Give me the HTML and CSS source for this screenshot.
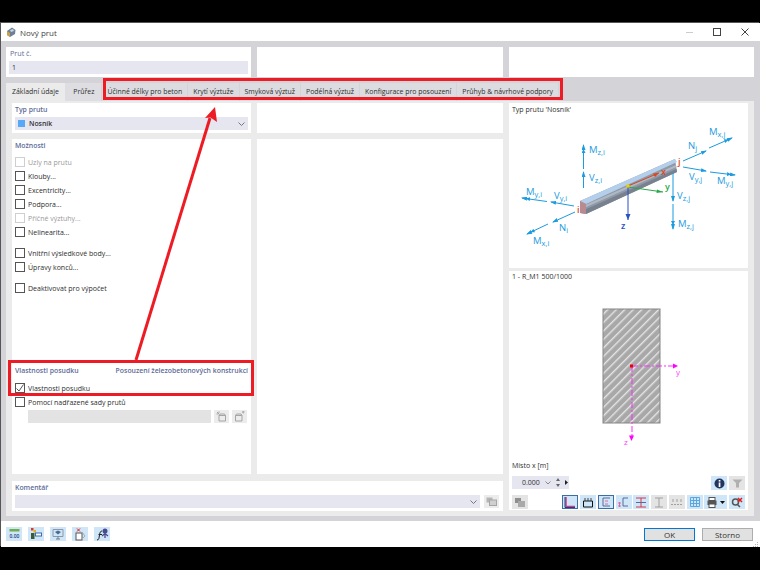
FILE: index.html
```html
<!DOCTYPE html>
<html lang="cs">
<head>
    <meta charset="UTF-8">
    <title>Nový prut</title>
    <link rel="stylesheet" href="styles.css">
</head>
<body>
<svg width="0" height="0" class="defs">
    <defs>
        <pattern id="hatch" patternUnits="userSpaceOnUse" width="6" height="6" patternTransform="rotate(45)">
            <rect width="6" height="6" fill="#a8a8a8"/>
            <rect width="1.4" height="6" fill="#e4e4e4"/>
        </pattern>
        <marker id="head" markerWidth="6" markerHeight="4" refX="5" refY="2" orient="auto" markerUnits="userSpaceOnUse">
            <path d="M0 0L6 2L0 4Z" fill="#1b9be0"/>
        </marker>
        <marker id="head2" markerWidth="9" markerHeight="4" refX="8" refY="2" orient="auto" markerUnits="userSpaceOnUse">
            <path d="M0 0L4 2L0 4ZM3 0L9 2L3 4Z" fill="#1b9be0"/>
        </marker>
    </defs>
</svg>

<div class="window">
    <div class="titlebar">
        <svg class="app-icon" width="10" height="11" viewBox="0 0 10 11">
            <path d="M1 4L6 0.5L9.5 3L9 7L4 10L1 8Z" fill="#6d7f99"/>
            <path d="M1 8L4 10V6L1 4Z" fill="#c9a24a"/>
            <path d="M4 3L7 2L8 4L5 5Z" fill="#c6d4e6"/>
        </svg>
        <span class="title">Nový prut</span>
        <div class="win-controls">
            <span class="win-min"></span>
            <span class="win-max"></span>
            <svg width="8" height="8" viewBox="0 0 8 8"><path d="M0.5 0.5L7.5 7.5M7.5 0.5L0.5 7.5" stroke="#444" fill="none"/></svg>
        </div>
    </div>

    <div class="top-row">
        <div class="panel top-panel">
            <div class="heading">Prut č.</div>
            <div class="field">1</div>
        </div>
        <div class="panel top-panel mid"></div>
        <div class="panel top-panel"></div>
    </div>

    <div class="tabs">
        <div class="tab active">Základní údaje</div>
        <div class="tab plain">Průřez</div>
        <div class="tab">Účinné délky pro beton</div>
        <div class="tab">Krytí výztuže</div>
        <div class="tab">Smyková výztuž</div>
        <div class="tab">Podélná výztuž</div>
        <div class="tab">Konfigurace pro posouzení</div>
        <div class="tab">Průhyb &amp; návrhové podpory</div>
    </div>

    <div class="content">
        <div class="left-side">
            <div class="columns">
                <div class="col-a">
                    <div class="panel type-panel">
                        <div class="heading">Typ prutu</div>
                        <div class="field select">
                            <span class="swatch"></span>
                            <span class="strong">Nosník</span>
                            <svg class="chevron" width="7" height="4" viewBox="0 0 7 4"><path d="M0.5 0.5L3.5 3.5L6.5 0.5" fill="none" stroke="#777"/></svg>
                        </div>
                    </div>
                    <div class="panel options">
                        <div class="heading">Možnosti</div>
                        <div class="checks">
                            <div class="check off"><span class="box"></span>Uzly na prutu</div>
                            <div class="check"><span class="box"></span>Klouby...</div>
                            <div class="check"><span class="box"></span>Excentricity...</div>
                            <div class="check"><span class="box"></span>Podpora...</div>
                            <div class="check off"><span class="box"></span>Příčné výztuhy...</div>
                            <div class="check"><span class="box"></span>Nelinearita...</div>
                        </div>
                        <div class="checks">
                            <div class="check"><span class="box"></span>Vnitřní výsledkové body...</div>
                            <div class="check"><span class="box"></span>Úpravy konců...</div>
                        </div>
                        <div class="checks">
                            <div class="check"><span class="box"></span>Deaktivovat pro výpočet</div>
                        </div>
                        <div class="design">
                            <div class="design-head">
                                <span class="heading">Vlastnosti posudku</span>
                                <span class="heading">Posouzení železobetonových konstrukcí</span>
                            </div>
                            <div class="check">
                                <span class="box">
                                    <svg width="8" height="8" viewBox="0 0 8 8"><path d="M0.5 4.5L3 7L7.5 0.5" fill="none" stroke="#555"/></svg>
                                </span>Vlastnosti posudku
                            </div>
                            <div class="check"><span class="box"></span>Pomocí nadřazené sady prutů</div>
                            <div class="set-row">
                                <div class="set-field"></div>
                                <div class="set-btn">
                                    <svg width="11" height="11" viewBox="0 0 11 11"><path d="M3 4.5H9.5V10H3ZM3 4.5L4 3H8.5L9.5 4.5M1 1L3 3M0.5 3H2.5M3 0.5V2" fill="none" stroke="#a5a5a5"/></svg>
                                </div>
                                <div class="set-btn">
                                    <svg width="11" height="11" viewBox="0 0 11 11"><path d="M1.5 4.5H8V10H1.5ZM1.5 4.5L2.5 3H7L8 4.5M8 1H10.5M9.2 0V2.5" fill="none" stroke="#a5a5a5"/></svg>
                                </div>
                            </div>
                        </div>
                    </div>
                </div>
                <div class="col-b">
                    <div class="panel type-panel"></div>
                    <div class="panel options"></div>
                </div>
            </div>
            <div class="panel comment">
                <div class="heading">Komentář</div>
                <div class="comment-row">
                    <div class="field select comment-field">
                        <svg class="chevron" width="7" height="4" viewBox="0 0 7 4"><path d="M0.5 0.5L3.5 3.5L6.5 0.5" fill="none" stroke="#777"/></svg>
                    </div>
                    <div class="comment-btn">
                        <svg width="11" height="9" viewBox="0 0 11 9"><rect x="0.5" y="0.5" width="6" height="5" fill="#b5b5b5"/><rect x="3.5" y="3" width="7" height="5.5" fill="#cfcfcf" stroke="#a5a5a5"/></svg>
                    </div>
                </div>
            </div>
        </div>

        <div class="right-side">
            <div class="panel graphic">
                <div class="graphic-label">Typ prutu 'Nosník'</div>
                <svg class="beam" width="239" height="165" viewBox="509 103 239 165">
                    <!-- beam -->
                    <path d="M580 201L675 159L677 172L586 214L580 213Z" fill="#8f99a8"/>
                    <path d="M580 201L675 159L677 162L586 204Z" fill="#b4cfeb"/>
                    <path d="M583 206L676 165L676.500 167L584 208Z" fill="#b0b8c4"/>
                    <path d="M584 210L676.500 169L677 172L586 214Z" fill="#78828f"/>
                    <path d="M580 201L586 204V214L580 213Z" fill="#b98a90"/>
                    <!-- local axes -->
                    <path d="M628 186L659 173" stroke="#d8471c" fill="none"/>
                    <path d="M659 173L653 173.500L655 177Z" fill="#d8471c"/>
                    <path d="M628 187L663 192" stroke="#2aa84a" fill="none"/>
                    <path d="M663 192L657 189.500L656.500 193Z" fill="#2aa84a"/>
                    <path d="M628 187V220" stroke="#2a50c8" fill="none"/>
                    <path d="M628 220L625.500 214H630.500Z" fill="#2a50c8"/>
                    <circle cx="628" cy="186" r="1.800" fill="#f0d000"/>
                    <!-- forces -->
                    <g stroke="#1b9be0" fill="none">
                        <path d="M583.500 188V172" marker-end="url(#head)"/>
                        <path d="M583.500 169V145" marker-end="url(#head2)"/>
                        <path d="M574 206L551 202" marker-end="url(#head)"/>
                        <path d="M547 201.500L522 198" marker-end="url(#head2)"/>
                        <path d="M575 212L553 222" marker-end="url(#head)"/>
                        <path d="M548 224L527 234" marker-end="url(#head2)"/>
                        <path d="M683 161L706 151" marker-end="url(#head)"/>
                        <path d="M709 148L732 138" marker-end="url(#head2)"/>
                        <path d="M683 167L706 171" marker-end="url(#head)"/>
                        <path d="M710 172L735 175" marker-end="url(#head2)"/>
                        <path d="M673 173V201" marker-end="url(#head)"/>
                        <path d="M673 204V229" marker-end="url(#head2)"/>
                    </g>
                    <g class="force-label">
                        <text x="589" y="153">M<tspan class="sub" dy="2">z,i</tspan></text>
                        <text x="589" y="181">V<tspan class="sub" dy="2">z,i</tspan></text>
                        <text x="526" y="195">M<tspan class="sub" dy="2">y,i</tspan></text>
                        <text x="554" y="199">V<tspan class="sub" dy="2">y,i</tspan></text>
                        <text x="559" y="231">N<tspan class="sub" dy="2">i</tspan></text>
                        <text x="533" y="244">M<tspan class="sub" dy="2">x,i</tspan></text>
                        <text x="688" y="149">N<tspan class="sub" dy="2">j</tspan></text>
                        <text x="709" y="135">M<tspan class="sub" dy="2">x,j</tspan></text>
                        <text x="689" y="180">V<tspan class="sub" dy="2">y,j</tspan></text>
                        <text x="717" y="184">M<tspan class="sub" dy="2">y,j</tspan></text>
                        <text x="677" y="199">V<tspan class="sub" dy="2">z,j</tspan></text>
                        <text x="678" y="227">M<tspan class="sub" dy="2">z,j</tspan></text>
                    </g>
                    <text class="axis-label" x="577" y="213" fill="#d8471c">i</text>
                    <text class="axis-label" x="678" y="165" fill="#d8471c">j</text>
                    <text class="axis-label" x="661" y="175" fill="#d8471c">x</text>
                    <text class="axis-label" x="665" y="190" fill="#2aa84a">y</text>
                    <text class="axis-label" x="621" y="229" fill="#2a50c8">z</text>
                </svg>
            </div>
            <div class="panel section">
                <div class="section-label">1 - R_M1 500/1000</div>
                <svg class="section-view" width="239" height="177" viewBox="509 283 239 177">
                    <rect x="603" y="309" width="57" height="114" fill="url(#hatch)" stroke="#858585"/>
                    <path d="M632 366H675M632 366V436" stroke="#ff2cff" stroke-dasharray="6 2 2 2" fill="none"/>
                    <path d="M678 366L673 363.500V368.500Z" fill="#ff00ff"/>
                    <path d="M631.500 441L629 435.500H634Z" fill="#ff00ff"/>
                    <rect x="630" y="364.500" width="3" height="3" fill="#f00000"/>
                    <text class="section-axis" x="676" y="375">y</text>
                    <text class="section-axis" x="624" y="445">z</text>
                </svg>
                <div class="section-label">Místo x [m]</div>
                <div class="spin-row">
                    <div class="spinner">
                        <span class="spin-value">0.000</span>
                        <svg width="6" height="4" viewBox="0 0 6 4"><path d="M0.500 0.500L3 3L5.500 0.500" fill="none" stroke="#888"/></svg>
                        <svg width="4" height="9" viewBox="0 0 4 9"><path d="M2 0L4 3H0ZM2 9L0 6H4Z" fill="#666"/></svg>
                        <svg width="3" height="5" viewBox="0 0 3 5"><path d="M0 0L3 2.500L0 5Z" fill="#222"/></svg>
                    </div>
                    <div class="spin-tools">
                        <div class="tool on">
                            <svg width="11" height="11" viewBox="0 0 11 11"><circle cx="5.500" cy="5.500" r="5" fill="#23345e"/><rect x="4.700" y="4.500" width="1.700" height="4.500" fill="#fff"/><rect x="4.700" y="2" width="1.700" height="1.600" fill="#fff"/></svg>
                        </div>
                        <div class="tool gray">
                            <svg width="11" height="9" viewBox="0 0 11 9"><path d="M0.500 0.500H10.500L7 4V8.500H4V4Z" fill="#b0b0b0"/></svg>
                        </div>
                    </div>
                </div>
                <div class="toolbar">
                    <div class="tool gray">
                        <svg width="12" height="11" viewBox="0 0 12 11"><rect x="1" y="1" width="6" height="5" fill="#8e8e8e"/><rect x="4" y="4" width="7" height="6" fill="#a9a9a9"/></svg>
                    </div>
                    <div class="tool-group">
                        <div class="tool on framed"><svg width="12" height="12" viewBox="0 0 12 12"><path d="M2 1V10.500H11" fill="none" stroke="#d8388c" stroke-width="1.500"/><path d="M1 1V11.500H11" fill="none" stroke="#1e3f7a"/></svg></div>
                        <div class="tool on"><svg width="12" height="11" viewBox="0 0 12 11"><path d="M1.500 4H10.500V10H1.500Z" fill="none" stroke="#111"/><path d="M3 1V4M6 1V4M9 1V4" stroke="#444"/></svg></div>
                        <div class="tool on framed"><svg width="12" height="12" viewBox="0 0 12 12"><path d="M3 2H10M3 2V10H10" fill="none" stroke="#5a6a95"/><path d="M5 5H8M5 8H8" stroke="#d86aa8"/></svg></div>
                        <div class="tool on"><svg width="13" height="12" viewBox="0 0 13 12"><path d="M6 2H11M6 2V10H11" fill="none" stroke="#5a6a95"/><path d="M1 7H4M1 10H4M2.500 6V11" stroke="#d86aa8"/></svg></div>
                        <div class="tool on"><svg width="12" height="11" viewBox="0 0 12 11"><path d="M1 1H11M1 10H11M6 1V10" stroke="#d8384c" fill="none"/><path d="M1 5.500H11" stroke="#5a6a95"/></svg></div>
                        <div class="tool gray"><svg width="12" height="11" viewBox="0 0 12 11"><path d="M2 1H10M2 10H10M6 1V10" stroke="#a0a0a0" fill="none"/></svg></div>
                        <div class="tool gray"><svg width="12" height="7" viewBox="0 0 12 7"><path d="M0 5.500H12" stroke="#a0a0a0" stroke-dasharray="2 1"/><path d="M2 0V3M6 0V3M10 0V3" stroke="#a0a0a0"/></svg></div>
                        <div class="tool on"><svg width="10" height="10" viewBox="0 0 10 10"><path d="M0.500 0.500H9.500V9.500H0.500ZM0.500 3.500H9.500M0.500 6.500H9.500M3.500 0.500V9.500M6.500 0.500V9.500" fill="none" stroke="#5aa7e0"/></svg></div>
                        <div class="tool on wide">
                            <svg width="10" height="11" viewBox="0 0 10 11"><rect x="2" y="0.500" width="6" height="3" fill="#fff" stroke="#555"/><rect x="0.500" y="3.500" width="9" height="4.500" fill="#555"/><rect x="2" y="7" width="6" height="3.500" fill="#fff" stroke="#555"/></svg>
                            <svg width="5" height="3" viewBox="0 0 5 3"><path d="M0 0H5L2.500 3Z" fill="#111"/></svg>
                        </div>
                        <div class="tool on"><svg width="12" height="11" viewBox="0 0 12 11"><circle cx="4.500" cy="5" r="3" fill="none" stroke="#555" stroke-width="1.500"/><path d="M6.500 7.500L9 10" stroke="#555" stroke-width="1.500"/><path d="M7 1L11 5M11 1L7 5" stroke="#e02020" stroke-width="1.500"/></svg></div>
                    </div>
                </div>
            </div>
        </div>
    </div>

    <div class="footer">
        <div class="foot-tools">
            <div class="tool on"><svg width="11" height="10" viewBox="0 0 11 10"><rect x="0.500" y="0" width="10" height="2.500" fill="#6fae4e"/><text class="icon-text" x="0.500" y="9">0.00</text></svg></div>
            <div class="tool on"><svg width="12" height="12" viewBox="0 0 12 12"><rect x="1" y="0" width="2.500" height="2.500" fill="#d8382c"/><rect x="3.500" y="2" width="2.500" height="2.500" fill="#e0b020"/><rect x="1" y="5" width="3.500" height="6" fill="#3a5a3a"/><rect x="5.500" y="5" width="6" height="3" fill="#fff" stroke="#3a6ab0"/></svg></div>
            <div class="tool on"><svg width="12" height="12" viewBox="0 0 12 12"><path d="M1 1.500H11V8.500H1Z" fill="none" stroke="#8a98a8"/><path d="M3 4L6 2.500L9 4L6 6.500Z" fill="#4a6a90"/><path d="M6 8.500V11M4 11H8" stroke="#6a7a8a"/></svg></div>
            <div class="tool on"><svg width="12" height="13" viewBox="0 0 12 13"><path d="M3 0.500L6 3.500M6 0.500L3 3.500" stroke="#e02020"/><rect x="2" y="5" width="6" height="7" fill="#fff" stroke="#555"/><path d="M8 4L11 8L8 11" fill="none" stroke="#aaa"/></svg></div>
            <div class="tool on"><svg width="13" height="13" viewBox="0 0 13 13"><path d="M1 12C3 12 3 10 3.500 7C4 4 4.500 3 6 3M2.500 6.500H6" fill="none" stroke="#222"/><circle cx="9" cy="3" r="2.500" fill="#4a4a90"/><path d="M6 8L9 5.500L12 8M9 5.500V10" fill="none" stroke="#4a4a90" stroke-width="1.300"/></svg></div>
        </div>
        <div class="foot-buttons">
            <div class="btn default">OK</div>
            <div class="btn">Storno</div>
        </div>
    </div>
</div>

<!-- resize grip in the window corner -->
<svg class="grip" width="6" height="6" viewBox="0 0 6 6"><path d="M4 1H5V2H4ZM2 3H3V4H2ZM4 3H5V4H4ZM0 5H1V6H0ZM2 5H3V6H2ZM4 5H5V6H4Z" fill="#b5b5b5"/></svg>

<!-- red annotation over the dialog -->
<svg class="annotation" width="760" height="570" viewBox="0 0 760 570">
    <rect x="104.500" y="79.500" width="457" height="19" fill="none" stroke="#ed1c24" stroke-width="3"/>
    <rect x="9.500" y="361.500" width="243" height="33" fill="none" stroke="#ed1c24" stroke-width="3"/>
    <path d="M136 360L210 118" fill="none" stroke="#ed1c24" stroke-width="3"/>
    <path d="M215 107L217 122L210.500 117.500L205 118Z" fill="#ed1c24"/>
</svg>
</body>
</html>
```

FILE: styles.css
```css
/* Page is a dialog sitting on a black desktop */
html, body {
    margin: 0;
    height: 570px;
    overflow: hidden;
    background: #000;
}

body {
    font-family: "Open Sans", "Noto Sans", sans-serif;
    font-size: 7px;
    color: #2e2e2e;
    position: relative;
}

.defs {
    position: absolute;
}

.window {
    margin: 23px 0 0 1px;
    height: 524px;
    background: #d3d3d8;
    display: flex;
    flex-direction: column;
    box-shadow: -1px -1px 0 #555;
}

/* Title bar */
.titlebar {
    height: 18px;
    background: #fff;
    display: flex;
    align-items: center;
    padding-left: 5px;
    flex-shrink: 0;
}

.title {
    margin-left: 4px;
    font-size: 8px;
    color: #444;
}

.win-controls {
    margin-left: auto;
    display: flex;
    align-items: center;
    gap: 20px;
    padding-right: 11px;
}

.win-min {
    width: 7px;
    height: 1px;
    background: #ccc;
}

.win-max {
    width: 6px;
    height: 6px;
    border: 1px solid #444;
}

/* Panels */
.panel {
    background: #fff;
}

.heading {
    color: #5d6c98;
    font-weight: 600;
    font-size: 6.9px;
    line-height: 11px;
}

.field {
    background: #e6e6f0;
    height: 13px;
    line-height: 13px;
    padding-left: 3px;
    color: #333;
}

.top-row {
    display: flex;
    gap: 6px;
    padding: 6px 6px 6px 5px;
    flex-shrink: 0;
}

.top-panel {
    width: 245px;
    height: 30px;
    padding: 1px 3px 0;
    box-sizing: border-box;
}

.top-panel .heading {
    padding-left: 1px;
    margin-bottom: 2px;
    font-weight: 400;
    font-size: 7.2px;
}

.top-panel.mid {
    width: 246px;
}

/* Tabs */
.tabs {
    display: flex;
    height: 18px;
    margin-left: 5px;
    flex-shrink: 0;
}

.tab {
    padding: 0 5px;
    line-height: 18px;
    background: #dcdce0;
    border-left: 1px solid #d3d3d8;
    color: #2e2e2e;
    font-size: 6.9px;
    white-space: nowrap;
}

.tab.active {
    padding: 0 6.5px 0 6px;
    background: #ebebeb;
    border-left: 0;
}

.tab.plain {
    padding: 0 7px 0 8px;
    background: #dedee2;
    border-left: 0;
}

.content {
    margin: 0 6px 5px 5px;
    height: 415px;
    flex-shrink: 0;
    box-sizing: border-box;
    background: #ebebeb;
    padding: 2px 6px 5px;
    display: flex;
    gap: 6px;
}

.left-side {
    width: 491px;
    display: flex;
    flex-direction: column;
    gap: 7px;
}

.columns {
    display: flex;
    gap: 6px;
    height: 371px;
}

.col-a, .col-b {
    display: flex;
    flex-direction: column;
    gap: 6px;
}

.col-a {
    width: 239px;
}

.col-b {
    width: 246px;
}

.type-panel {
    height: 30px;
    padding: 1px 3px 0;
    box-sizing: border-box;
}

.type-panel .heading {
    margin-bottom: 2px;
}

.select {
    display: flex;
    align-items: center;
}

.swatch {
    width: 7px;
    height: 7px;
    background: #58a8f8;
    margin: 0 4px 0 0;
}

.strong {
    font-weight: 600;
    font-size: 6.9px;
}

.chevron {
    margin-left: auto;
    margin-right: 3px;
}

/* Options list */
.options {
    flex: 1;
    padding: 1px 3px;
    display: flex;
    flex-direction: column;
}

.options > .heading {
    margin-bottom: 4px;
}

.checks {
    margin-bottom: 7px;
}

.check {
    display: flex;
    align-items: center;
    height: 14px;
    color: #2e2e2e;
}

.check.off {
    color: #9a9a9a;
}

.box {
    width: 8px;
    height: 8px;
    border: 1px solid #555;
    margin-right: 3px;
    display: flex;
    align-items: center;
    justify-content: center;
    background: #fff;
}

.check.off .box {
    border-color: #cfcfcf;
}

.design {
    margin-top: auto;
    margin-bottom: 50px;
}

.design-head {
    display: flex;
    justify-content: space-between;
    padding-top: 2px;
    margin-bottom: 5px;
}

.set-row {
    display: flex;
    gap: 3px;
    margin-left: 13px;
    height: 13px;
    margin-top: 1px;
}

.set-field {
    width: 183px;
    background: #e3e3e3;
}

.set-btn {
    width: 15px;
    background: #ececec;
    display: flex;
    align-items: center;
    justify-content: center;
}

.set-btn:first-of-type {
    margin-left: 1px;
}

/* Comment */
.comment {
    height: 30px;
    padding: 1px 3px 0;
    box-sizing: border-box;
}

.comment .heading {
    margin-bottom: 2px;
}

.comment-row {
    display: flex;
    gap: 4px;
}

.comment-field {
    width: 465px;
    box-sizing: border-box;
}

.comment-btn {
    width: 15px;
    height: 13px;
    background: #ececec;
    display: flex;
    align-items: center;
    justify-content: center;
}

/* Right column */
.right-side {
    width: 239px;
    height: 407px;
    display: flex;
    flex-direction: column;
    gap: 3px;
}

.graphic {
    height: 165px;
    position: relative;
}

.graphic-label {
    position: absolute;
    left: 3px;
    top: 1px;
    line-height: 11px;
}

.beam, .section-view {
    display: block;
}

.force-label text {
    font-size: 9.5px;
    fill: #1b9be0;
}

.sub {
    font-size: 7.5px;
}

.axis-label {
    font-size: 9px;
    font-weight: 600;
}

.section-axis {
    font-size: 8px;
    fill: #ff40ff;
}

.section {
    flex: 1;
    display: flex;
    flex-direction: column;
}

.section-label {
    height: 12px;
    line-height: 12px;
    padding-left: 3px;
}

.spin-row {
    display: flex;
    justify-content: space-between;
    margin: 4px 3px 0;
}

.spinner {
    width: 57px;
    height: 13px;
    box-sizing: border-box;
    background: #e6e6f0;
    display: flex;
    align-items: center;
    gap: 5px;
    padding-left: 10px;
}

.spin-tools, .tool-group, .foot-tools {
    display: flex;
    gap: 2px;
}

.tool-group {
    gap: 1.75px;
}

.toolbar {
    display: flex;
    justify-content: space-between;
    margin: 5px 3px 0;
}

.tool {
    width: 16px;
    height: 14px;
    display: flex;
    align-items: center;
    justify-content: center;
    box-sizing: border-box;
}

.tool.on {
    background: #cfe6f8;
}

.tool.gray {
    background: #e4e4e4;
}

.tool.framed {
    border: 1px solid #3b6ea5;
}

.tool.wide {
    width: 23px;
    gap: 3px;
}

/* Footer */
.footer {
    height: 26px;
    background: #fff;
    margin-top: auto;
    display: flex;
    align-items: center;
    justify-content: space-between;
    padding: 0 7px 0 5px;
}

.foot-tools {
    gap: 6px;
}

.icon-text {
    font-size: 5px;
    fill: #1e3f7a;
    font-weight: 600;
}

.foot-buttons {
    display: flex;
    gap: 7px;
}

.btn {
    width: 51px;
    height: 13px;
    line-height: 11px;
    box-sizing: border-box;
    border: 1px solid #adadad;
    background: #e1e1e1;
    text-align: center;
    font-size: 8px;
    color: #333;
}

.btn.default {
    border-color: #0078d7;
}

.grip {
    position: absolute;
    left: 753px;
    top: 541px;
}

.annotation {
    position: absolute;
    left: 0;
    top: 0;
    pointer-events: none;
}
```
